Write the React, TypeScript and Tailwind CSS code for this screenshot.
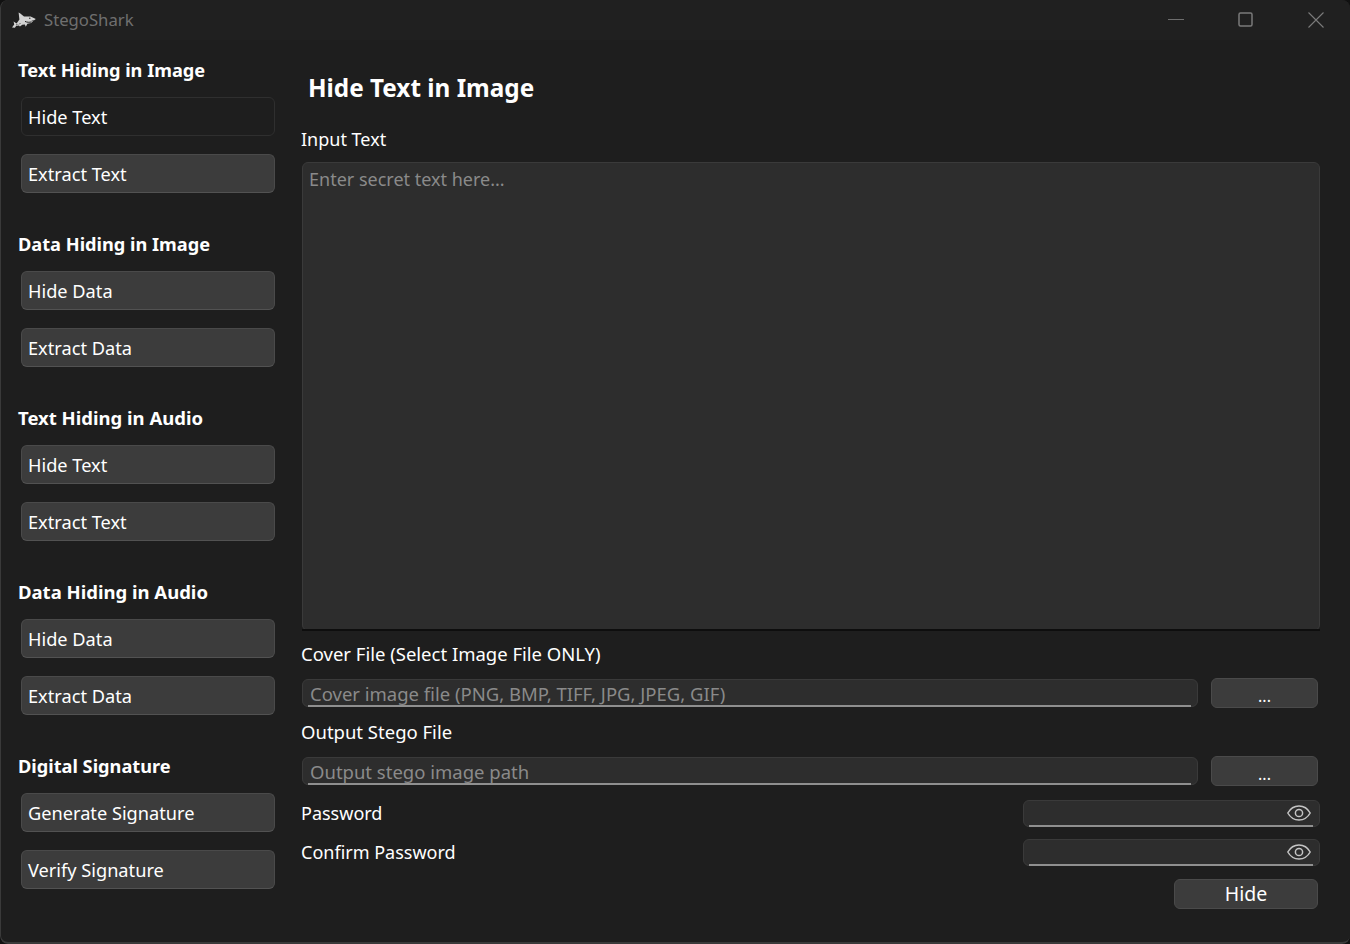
import React from "react";

const font = { fontFamily: '"Noto Sans", sans-serif' };

function NavButton({ label, active }: { label: string; active?: boolean }) {
  return (
    <button
      className={
        "block w-[254px] h-[39px] rounded-[6px] border pl-[6px] pt-[1px] text-left text-[18.2px] leading-[36px] text-white " +
        (active
          ? "bg-[#1e1e1e] border-[#2f2f2f]"
          : "bg-[#3c3c3c] border-[#4a4a4a] border-b-[#525252]")
      }
    >
      {label}
    </button>
  );
}

function Group({ title, a, b, active, wide }: { title: string; a: string; b: string; active?: boolean; wide?: boolean }) {
  return (
    <div className="flex flex-col">
      <div className={(wide ? "text-[18.5px]" : "text-[18.2px]") + " h-[24px] font-bold leading-[24px] text-white"}>{title}</div>
      <div className="ml-[3px] mt-[15px] flex flex-col gap-[18px]">
        <NavButton label={a} active={active} />
        <NavButton label={b} />
      </div>
    </div>
  );
}

function FileRow({ placeholder }: { placeholder: string }) {
  return (
    <div className="flex items-end">
      <div className="relative mb-[1px] ml-[1px] h-[28px] w-[896px] rounded-[6px] border border-[#3a3a3a] bg-[#2d2d2d] pl-[7px] pt-[1px] text-[18.5px] leading-[25px] text-[#8a8a8a]">
        {placeholder}
        <div className="absolute bottom-[-1px] left-[5px] right-[6px] h-[2px] bg-[#8f8f8f]" />
      </div>
      <button className="ml-[13px] h-[30px] w-[107px] rounded-[6px] border border-[#4a4a4a] bg-[#3c3c3c] pt-[6px] text-[16px] leading-[22px] text-white">
        ...
      </button>
    </div>
  );
}

function EyeIcon() {
  return (
    <svg width="24" height="16" viewBox="0 0 24 16" fill="none" stroke="#c4c4c4" strokeWidth="1.5" className="mb-[1px]">
      <path d="M0.8 8C3.5 3.2 7.5 1 12 1s8.5 2.2 11.2 7C20.5 12.8 16.5 15 12 15S3.5 12.8.8 8Z" />
      <circle cx="12" cy="8" r="3.6" />
    </svg>
  );
}

function PasswordRow({ label }: { label: string }) {
  return (
    <div className="flex h-[27px] items-center justify-between">
      <span className="mb-[1px] text-[18px] leading-[26px] text-white">{label}</span>
      <div className="relative mr-[-2px] flex h-[27px] w-[297px] items-center justify-end rounded-[6px] border border-[#3a3a3a] bg-[#2d2d2d] pr-[8px]">
        <EyeIcon />
        <div className="absolute bottom-[-1px] left-[5px] right-[6px] h-[2px] bg-[#8f8f8f]" />
      </div>
    </div>
  );
}

function Shark() {
  return (
    <svg width="24" height="17" viewBox="0 0 24 17">
      <path
        fill="#d2d2d2"
        d="M0 15.5 2.2 12.6 1.600 9.500l3 1.900L7.400 7.600 6.600.6 8 1.200l4 3.200 6.600.2 5.200 2.400-1.600 1.300-3 .5 1.800.4-1.800 1.900-3.800.6-1.600 3-1-2.300-2.500.3-2.400 1.800-1-1-2.800.6-1.200 1.600Z"
      />
      <path d="M13 9.400c2 1 4.400 1.100 6.600.5" stroke="#202020" strokeWidth="1" fill="none" />
      <path d="M4 13l1.500-.6M7 12.500l1.500-1.500" stroke="#5a5a5a" strokeWidth="1" fill="none" />
      <circle cx="17.800" cy="6.300" r=".7" fill="#202020" />
    </svg>
  );
}

export default function App() {
  return (
    <div style={font} className="h-[944px] w-[1350px] overflow-hidden bg-[#111111]">
      <div className="relative h-[944px] w-[1350px] overflow-hidden rounded-[8px] bg-[#1e1e1e]">
        <div className="flex h-[40px] items-center bg-[#202020]">
          <div className="ml-[12px]"><Shark /></div>
          <span className="ml-[8px] text-[16.7px] text-[#6f6f6f]">StegoShark</span>
          <div className="ml-auto flex items-center">
            <svg width="16" height="2" viewBox="0 0 16 2" className="mr-[54px]"><rect width="16" height="1" fill="#6e6e6e" /></svg>
            <svg width="15" height="15" viewBox="0 0 15 15" fill="none" stroke="#7a7a7a" strokeWidth="1.5" className="mr-[55px] mb-[1px]"><rect x="1" y="1" width="13" height="13" rx="1.5" /></svg>
            <svg width="16" height="16" viewBox="0 0 16 16" stroke="#7a7a7a" strokeWidth="1.1" className="mr-[26px]"><path d="M.5.5l15 15M15.500.5l-15 15" /></svg>
          </div>
        </div>
        <div className="flex">
          <aside className="ml-[18px] mt-[18px] flex w-[283px] flex-col gap-[39px]">
            <Group title="Text Hiding in Image" a="Hide Text" b="Extract Text" active />
            <Group title="Data Hiding in Image" a="Hide Data" b="Extract Data" />
            <Group title="Text Hiding in Audio" a="Hide Text" b="Extract Text" wide />
            <Group title="Data Hiding in Audio" a="Hide Data" b="Extract Data" wide />
            <Group title="Digital Signature" a="Generate Signature" b="Verify Signature" />
          </aside>
          <main className="flex w-[1017px] flex-col">
            <h1 className="ml-[7px] mt-[32px] h-[32px] text-[24.300px] font-bold leading-[32px] text-white">Hide Text in Image</h1>
            <div className="mt-[22px] h-[26px] text-[18px] leading-[26px] text-white">Input Text</div>
            <div className="relative ml-[1px] mt-[10px] h-[469px] w-[1018px] rounded-[6px] border border-[#3a3a3a] bg-[#2d2d2d] pl-[6px] pt-[3px] text-[18px] leading-[26px] text-[#8a8a8a]">
              Enter secret text here...
              <div className="absolute bottom-[-1px] left-[-1px] right-[-1px] h-[2px] bg-[#0e0e0e]" />
            </div>
            <div className="mt-[10px] h-[26px] text-[18.5px] leading-[26px] text-white">Cover File (Select Image File ONLY)</div>
            <div className="mt-[11px]"><FileRow placeholder="Cover image file (PNG, BMP, TIFF, JPG, JPEG, GIF)" /></div>
            <div className="mt-[11px] h-[26px] text-[18.5px] leading-[26px] text-white">Output Stego File</div>
            <div className="mt-[11px]"><FileRow placeholder="Output stego image path" /></div>
            <div className="mt-[14px] flex flex-col gap-[12px]">
              <PasswordRow label="Password" />
              <PasswordRow label="Confirm Password" />
            </div>
            <div className="mt-[13px] flex justify-end">
              <button className="h-[30px] w-[144px] rounded-[6px] border border-[#4a4a4a] bg-[#3c3c3c] text-[19.5px] leading-[28px] text-white">Hide</button>
            </div>
          </main>
        </div>
        <div className="pointer-events-none absolute inset-0 rounded-[8px] border-b-2 border-l border-[#3a3a3a]" />
      </div>
    </div>
  );
}
